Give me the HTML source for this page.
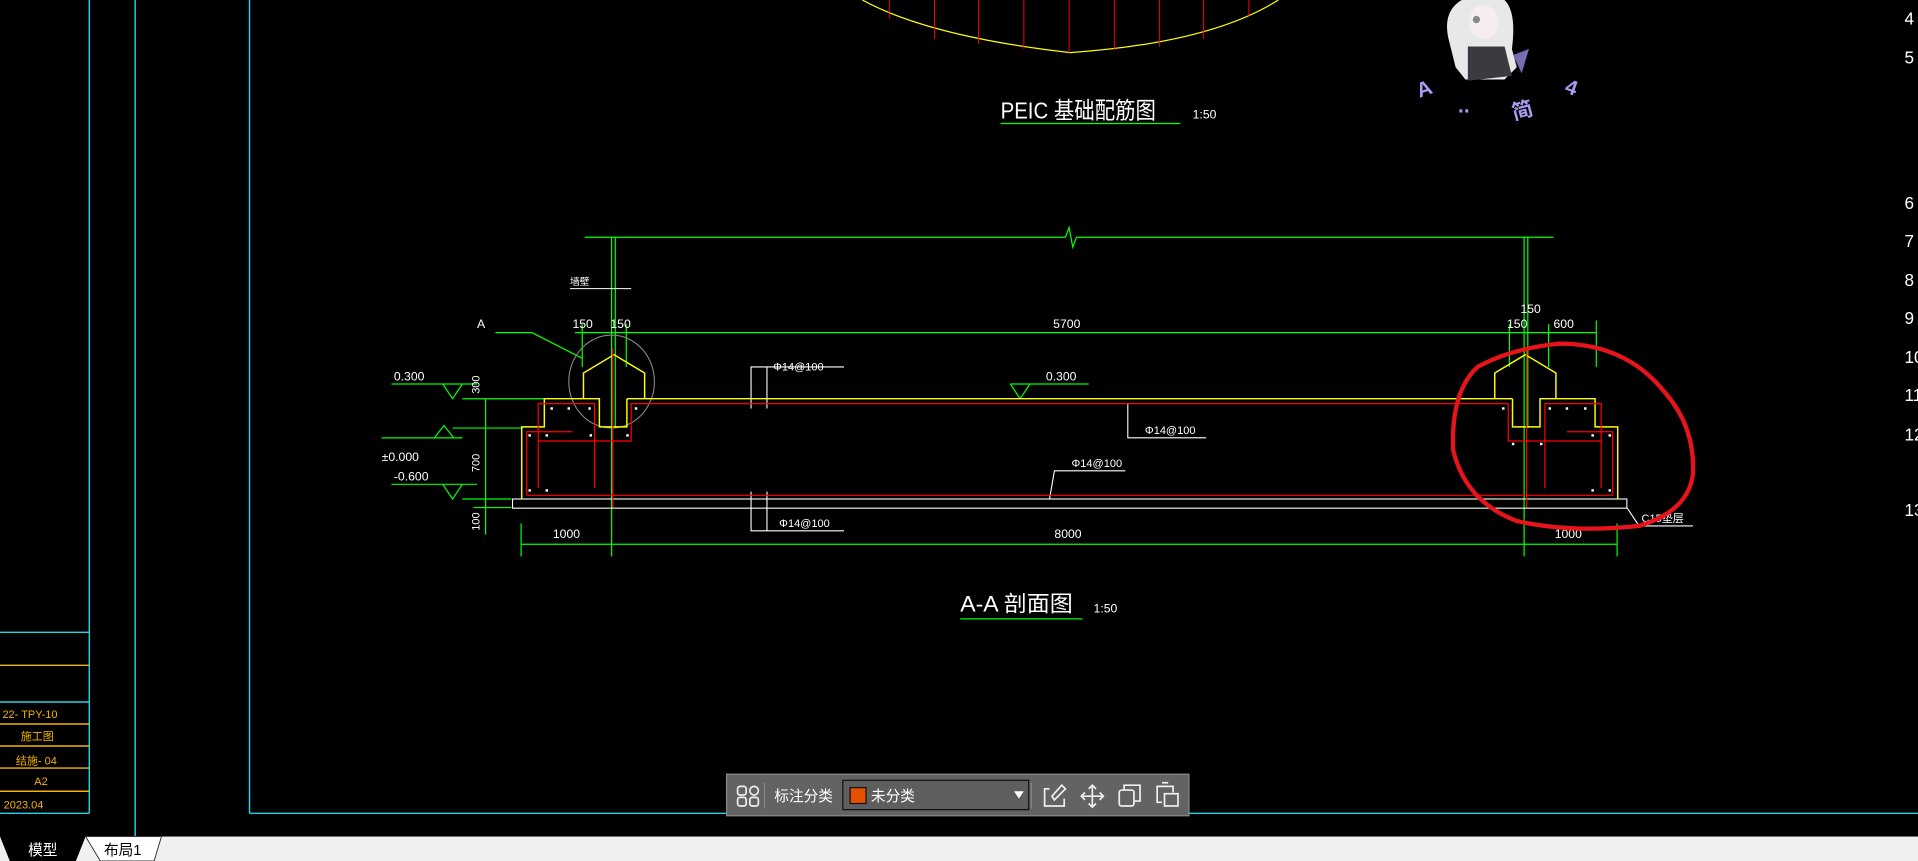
<!DOCTYPE html>
<html><head><meta charset="utf-8"><style>
html,body{margin:0;padding:0;background:#000;width:1918px;height:861px;overflow:hidden}
svg{display:block}
text{font-family:"Liberation Sans","Noto Sans CJK SC",sans-serif}
</style></head><body>
<svg width="1918" height="861" viewBox="0 0 1568 704" preserveAspectRatio="none" xmlns="http://www.w3.org/2000/svg">
<rect width="1568" height="704" fill="#000"/>
<g stroke="#22d3e0" stroke-width="1.2" fill="none">
<line x1="73" y1="0" x2="73" y2="665"/>
<line x1="110.5" y1="0" x2="110.5" y2="684"/>
<line x1="204" y1="0" x2="204" y2="665"/>
<line x1="204" y1="665" x2="1568" y2="665"/>
<line x1="0" y1="665" x2="73" y2="665"/>
<line x1="0" y1="517" x2="73" y2="517"/>
<line x1="0" y1="574" x2="73" y2="574"/>
</g>
<g stroke="#f5b400" stroke-width="1.2">
<line x1="0" y1="544" x2="73" y2="544"/>
<line x1="0" y1="592" x2="73" y2="592"/>
<line x1="0" y1="610" x2="73" y2="610"/>
<line x1="0" y1="628" x2="73" y2="628"/>
<line x1="0" y1="647" x2="73" y2="647"/>
</g>
<g fill="#f5b400" font-size="9">
<text x="2" y="587">22- TPY-10</text>
<text x="17" y="605">施工图</text>
<text x="13" y="625">结施-  04</text>
<text x="28" y="642">A2</text>
<text x="3" y="661">2023.04</text>
</g>
<g fill="#fff" font-size="14">
<text x="1557" y="20">4</text><text x="1557" y="52">5</text>
<text x="1557" y="171">6</text><text x="1557" y="202">7</text>
<text x="1557" y="234">8</text><text x="1557" y="265">9</text>
<text x="1557" y="297">10</text><text x="1557" y="328">11</text>
<text x="1557" y="360">12</text><text x="1557" y="422">13</text>
</g>
<path d="M705 0 Q760 30 875 43 Q990 35 1045 0" stroke="#ffff00" fill="none" stroke-width="1"/>
<g stroke="#ff0000" stroke-width="0.8">
<line x1="727" y1="0" x2="727" y2="15"/><line x1="764" y1="0" x2="764" y2="32"/><line x1="800" y1="0" x2="800" y2="36"/>
<line x1="837" y1="0" x2="837" y2="40"/><line x1="874" y1="0" x2="874" y2="43"/><line x1="911" y1="0" x2="911" y2="41"/>
<line x1="948" y1="0" x2="948" y2="38"/><line x1="984" y1="0" x2="984" y2="32"/><line x1="1021" y1="0" x2="1021" y2="13"/>
</g>
<text x="818" y="97" fill="#fff" font-size="19" textLength="127" lengthAdjust="spacingAndGlyphs">PEIC  基础配筋图</text>
<line x1="818" y1="101" x2="965" y2="101" stroke="#00ff00" stroke-width="1"/>
<text x="975" y="97" fill="#fff" font-size="10">1:50</text>
<g>
<path d="M1185 35 Q1178 10 1195 0 L1230 0 Q1240 10 1236 40 L1240 55 L1230 65 L1198 65 L1190 55 Z" fill="#e8e8e8"/>
<ellipse cx="1213" cy="18" rx="12" ry="14" fill="#f6eeee"/>
<path d="M1200 38 L1230 38 L1236 62 L1200 66 Z" fill="#3a3a40"/>
<circle cx="1207" cy="16" r="3" fill="#888"/>
<path d="M1237 45 L1250 40 L1244 60 Z" fill="#7a6ab0"/>
<g fill="#a79cf0" font-size="17" font-weight="bold">
<text x="1158" y="78" transform="rotate(-20 1165 72)">A</text>
<text x="1192" y="92">..</text>
<text x="1236" y="96" transform="rotate(-15 1245 90)">简</text>
<text x="1280" y="78" transform="rotate(20 1287 72)">4</text>
</g>
</g>
<g stroke="#00ff00" stroke-width="1" fill="none">
<path d="M478 194 L871 194 L874 186 L877 202 L880 194 L1270 194"/>
<line x1="500" y1="194" x2="500" y2="455"/>
<line x1="503" y1="194" x2="503" y2="350"/>
<line x1="1246" y1="194" x2="1246" y2="455"/>
<line x1="1249" y1="194" x2="1249" y2="350"/>
<line x1="470" y1="272" x2="1305" y2="272"/>
<line x1="476" y1="265" x2="476" y2="300"/><line x1="512" y1="265" x2="512" y2="300"/>
<line x1="1234" y1="265" x2="1234" y2="300"/><line x1="1266" y1="265" x2="1266" y2="300"/><line x1="1305" y1="262" x2="1305" y2="300"/>
<path d="M405 272 L435 272 L476 293"/>
<line x1="426" y1="445" x2="1322" y2="445"/>
<line x1="426" y1="428" x2="426" y2="455"/><line x1="1322" y1="428" x2="1322" y2="455"/>
<line x1="397" y1="326" x2="397" y2="437"/>
<line x1="378" y1="326" x2="446" y2="326"/>
<line x1="370" y1="350" x2="427" y2="350"/>
<line x1="378" y1="408" x2="418" y2="408"/>
<line x1="387" y1="415" x2="418" y2="415"/>
<line x1="320" y1="314" x2="390" y2="314"/><path d="M362 314 L370 326 L378 314"/>
<line x1="312" y1="358" x2="378" y2="358"/><path d="M355 358 L363 348 L371 358"/>
<line x1="320" y1="396" x2="390" y2="396"/><path d="M362 396 L370 408 L378 396"/>
<line x1="826" y1="314" x2="890" y2="314"/><path d="M826 314 L834 326 L842 314"/>
</g>
<g stroke="#fff" stroke-width="0.9" fill="none">
<rect x="419" y="408" width="911" height="7.5"/>
<line x1="466" y1="236" x2="516" y2="236"/>
<path d="M614 334 L614 300 L690 300"/><line x1="627" y1="300" x2="627" y2="334"/>
<path d="M922 330 L922 358 L986 358"/>
<path d="M858 408 L862 385 L920 385"/>
<path d="M614 402 L614 434 L690 434"/><line x1="627" y1="402" x2="627" y2="434"/>
<path d="M1330 415 L1340 430 L1384 430"/>
</g>
<ellipse cx="500" cy="312" rx="35" ry="38" stroke="#888" fill="none" stroke-width="0.9"/>
<g stroke="#ffff00" stroke-width="1.2" fill="none">
<path d="M426.5 408 L426.5 349 L445 349 L445 326 L477 326 L477 305 L502 290 L527 305 L527 326 M512.5 326 L512.5 349 L490 349 L490 326 L477 326"/>
<path d="M512.5 326 L1236.5 326"/>
<path d="M1322.5 408 L1322.5 349 L1304 349 L1304 326 L1272 326 L1272 305 L1247 290 L1222 305 L1222 326 M1236.5 326 L1236.5 349 L1259 349 L1259 326 L1272 326"/>
</g>
<g stroke="#ff0000" stroke-width="1" fill="none">
<path d="M430.6 405 L1318.4 405"/>
<path d="M430.6 405 L430.6 353 L468 353"/>
<path d="M440 399 L440 330 L486 330 L486 399"/>
<path d="M440 360.6 L516 360.6 L516 330 L1233 330 L1233 360.6 L1309 360.6"/>
<path d="M1318.4 405 L1318.4 353 L1281 353"/>
<path d="M1309 399 L1309 330 L1263 330 L1263 399"/>
<line x1="501" y1="285" x2="501" y2="415"/>
<line x1="1248" y1="285" x2="1248" y2="415"/>
</g>
<g fill="#fff">
<rect x="450" y="333" width="2" height="2"/><rect x="464" y="333" width="2" height="2"/><rect x="481" y="333" width="2" height="2"/><rect x="519" y="333" width="2" height="2"/>
<rect x="432" y="355" width="2" height="2"/><rect x="446" y="355" width="2" height="2"/><rect x="482" y="355" width="2" height="2"/><rect x="512" y="355" width="2" height="2"/>
<rect x="432" y="400" width="2" height="2"/><rect x="446" y="400" width="2" height="2"/>
<rect x="1266" y="333" width="2" height="2"/><rect x="1280" y="333" width="2" height="2"/><rect x="1295" y="333" width="2" height="2"/><rect x="1228" y="333" width="2" height="2"/>
<rect x="1301" y="355" width="2" height="2"/><rect x="1315" y="355" width="2" height="2"/><rect x="1236" y="362" width="2" height="2"/><rect x="1259" y="362" width="2" height="2"/>
<rect x="1301" y="400" width="2" height="2"/><rect x="1315" y="400" width="2" height="2"/>
</g>
<g fill="#fff" font-size="10">
<text x="390" y="268">A</text>
<text x="468" y="268">150</text><text x="499" y="268">150</text>
<text x="861" y="268">5700</text>
<text x="1232" y="268">150</text><text x="1243" y="256">150</text><text x="1270" y="268">600</text>
<text x="466" y="233" font-size="8">墙壁</text>
<text x="322" y="311">0.300</text>
<text x="855" y="311">0.300</text>
<text x="312" y="377">±0.000</text>
<text x="322" y="393">-0.600</text>
<text x="632" y="303" font-size="9">Φ14@100</text>
<text x="936" y="355" font-size="9">Φ14@100</text>
<text x="876" y="382" font-size="9">Φ14@100</text>
<text x="637" y="431" font-size="9">Φ14@100</text>
<text x="1342" y="427" font-size="9">C15垫层</text>
<text x="452" y="440">1000</text><text x="862" y="440">8000</text><text x="1271" y="440">1000</text>
<text transform="translate(392 322) rotate(-90)" font-size="9">300</text>
<text transform="translate(392 386) rotate(-90)" font-size="9">700</text>
<text transform="translate(392 434) rotate(-90)" font-size="9">100</text>
</g>
<text x="785" y="500" fill="#fff" font-size="18" textLength="92" lengthAdjust="spacingAndGlyphs">A-A  剖面图</text>
<line x1="785" y1="506" x2="885" y2="506" stroke="#00ff00"/>
<text x="894" y="501" fill="#fff" font-size="10">1:50</text>
<path d="M1275 281 Q1235 285 1208 300 Q1186 320 1188 368 Q1198 410 1240 426 Q1285 436 1340 430 Q1380 418 1384 388 Q1386 350 1362 322 Q1330 281 1275 281 Z" stroke="#e8141c" stroke-width="3.5" fill="none"/>
<rect x="594" y="633" width="378" height="34" fill="#636363" stroke="#8a8a8a"/>
<g stroke="#eee" stroke-width="1.4" fill="none">
<rect x="603" y="643" width="7" height="7" rx="2"/><rect x="613" y="643" width="7" height="7" rx="3.5"/>
<rect x="603" y="652" width="7" height="7" rx="2"/><rect x="613" y="652" width="7" height="7" rx="2"/>
<path d="M858 645 L854 645 L854 659 L870 659 L870 653 M862 654 L871 645 L868 642 L860 651 Z"/>
<path d="M893 642 L893 660 M884 651 L902 651 M890 645 L893 642 L896 645 M890 657 L893 660 L896 657 M887 648 L884 651 L887 654 M899 648 L902 651 L899 654"/>
<rect x="915" y="646" width="12" height="13" rx="2"/><path d="M919 646 L919 642 L932 642 L932 655 L927 655"/>
<path d="M950 656 L946 656 L946 643 L959 643 L959 648 M950 640 L955 640"/><rect x="952" y="649" width="11" height="10"/>
</g>
<line x1="625" y1="640" x2="625" y2="661" stroke="#888"/>
<line x1="843" y1="640" x2="843" y2="661" stroke="#888"/>
<text x="633" y="655" fill="#fff" font-size="12">标注分类</text>
<rect x="689" y="638" width="152" height="24" fill="#5e5e5e" stroke="#111"/>
<rect x="695" y="644" width="13" height="13" fill="#e65100" stroke="#111"/>
<text x="712" y="655" fill="#fff" font-size="12">未分类</text>
<path d="M829 647 L837 647 L833 653 Z" fill="#fff"/>
<rect x="0" y="684" width="1568" height="20" fill="#f0f0f0"/>
<path d="M0 684 L70 684 L62 704 L8 704 Z" fill="#000"/>
<path d="M70 684 L132 684 L126 704 L82 704 Z" fill="#fff" stroke="#333" stroke-width="0.8"/>
<text x="23" y="699" fill="#fff" font-size="12">模型</text>
<text x="85" y="699" fill="#000" font-size="12">布局1</text>
</svg>
</body></html>
